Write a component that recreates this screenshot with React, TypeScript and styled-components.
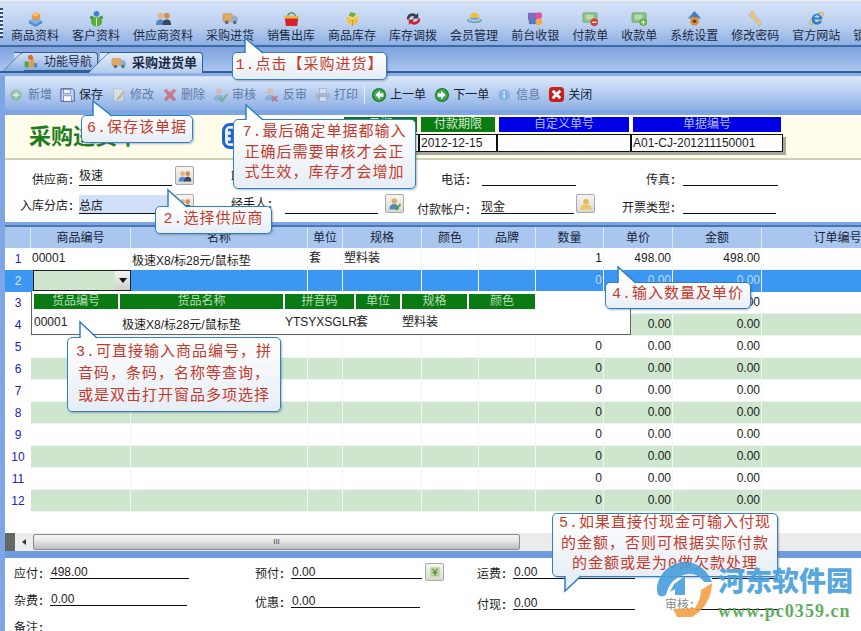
import React from "react";
import styled, { createGlobalStyle } from "styled-components";

const Global = createGlobalStyle`
  html, body { margin: 0; padding: 0; background: #7aa3e2; }
  * { box-sizing: border-box; }
`;

const FONT = `"Liberation Sans", "Noto Sans CJK SC", sans-serif`;

const Page = styled.div`
  position: relative; width: 861px; height: 631px; overflow: hidden;
  background: #7fa6e4; font: 12px/16px ${FONT}; color: #1c1c1c;
`;
const TopEdge = styled.div`height: 3px; background: linear-gradient(#f2f4f8, #c4d3ea);`;
const NavBar = styled.nav`
  position: relative; height: 44px; display: flex; gap: 13px; padding: 7px 0 0 11px; overflow: hidden;
  background: linear-gradient(#d3e2f8 0%, #bcd0f0 50%, #8eb0e3 100%);
  border-bottom: 2px solid #3d6ba6;
  &::before {
    content: ""; position: absolute; left: 0; top: 5px; width: 3px; height: 30px;
    background: repeating-linear-gradient(#2c4f7c 0 2px, #e6eef9 2px 4px);
  }
`;
const NavItem = styled.div`
  flex: none; display: flex; flex-direction: column; align-items: center; white-space: nowrap;
  color: #1b2a44; line-height: 16px; gap: 1px;
`;
const TabStrip = styled.div`
  height: 26px; display: flex; align-items: flex-end; padding-left: 14px; gap: 2px;
  background: linear-gradient(#7ea2de, #aac5ef);
  border-bottom: 2px solid #2f5f96;
`;
const Tab = styled.div<{ $active?: boolean }>`
  position: relative; height: ${p => (p.$active ? 21 : 19)}px; width: ${p => (p.$active ? 103 : 84)}px;
  display: flex; align-items: center; gap: ${p => (p.$active ? 5 : 6)}px; padding-left: ${p => (p.$active ? 11 : 9)}px;
  margin-bottom: ${p => (p.$active ? -2 : 0)}px; font-weight: ${p => (p.$active ? 700 : 400)};
  font-size: ${p => (p.$active ? 13 : 12)}px;
  background: ${p => (p.$active ? "linear-gradient(#e2ecfb, #b4cbef)" : "linear-gradient(#cfdff6, #8fb0e4)")};
  border: 1px solid #2f5f96; border-left: 0; border-bottom: ${p => (p.$active ? 0 : 1)}px solid #2f5f96;
  border-radius: 0 4px 0 0; color: #1b2a44; z-index: ${p => (p.$active ? 2 : 1)};
  & > * { position: relative; z-index: 1; }
  &::before {
    content: ""; position: absolute; z-index: 0; left: -2px; top: -1px; bottom: ${p => (p.$active ? 0 : -1)}px; width: 20px;
    background: inherit; border-left: 1px solid #2f5f96; border-top: 1px solid #2f5f96;
    transform: skewX(-45deg); border-radius: 3px 0 0 0;
  }
`;
const SpacerLight = styled.div`height: 3px; background: #8bafe4;`;
const Body = styled.div`padding-left: 5px;`;
const ActionBar = styled.div`
  height: 34px; display: flex; align-items: center; gap: 8px; padding: 2px 0 0 4px;
  background: linear-gradient(#dbe8fb, #8eb0e5); border-top: 1px solid #cfdcf1;
`;
const Action = styled.div<{ $off?: boolean }>`
  display: flex; align-items: center; gap: 3px; white-space: nowrap;
  color: ${p => (p.$off ? "#5d7aa6" : "#15233a")};
  & > svg { opacity: ${p => (p.$off ? 0.5 : 1)}; }
`;
const Divider = styled.div`width: 1px; height: 18px; background: #6f8fbd; border-right: 1px solid #e6eef9; margin: 0 -2px;`;
const Gap = styled.div<{ $h: number; $c?: string }>`height: ${p => p.$h}px; background: ${p => p.$c || "#7fa6e4"};`;
const TitleBand = styled.div`
  height: 45px; display: flex; background: #fffdea; border-bottom: 2px solid #cfcfb4; padding-top: 2px; position: relative;
`;
const Title = styled.div`
  width: 217px; padding: 3px 0 0 24px; font-size: 22px; line-height: 28px; font-weight: 700; color: #1f7d1f; white-space: nowrap;
  font-family: "Noto Sans CJK SC", sans-serif;
`;
const Stamp = styled.svg`flex: none; margin: 6px 90px 0 0;`;
const Meta = styled.div`
  display: grid; grid-template-columns: 77px 78px 134px 152px; grid-template-rows: 15px 18px; row-gap: 2px;
`;
const MetaHead = styled.div<{ $blue?: boolean }>`
  margin: 0 2px; text-align: center; line-height: 15px;
  background: ${p => (p.$blue ? "#0000e6" : "#0a7a12")};
  color: ${p => (p.$blue ? "#aebcff" : "#d4ecd4")};
`;
const MetaValue = styled.div`
  background: #fff; border: 1px solid #111; padding-left: 1px; line-height: 16px; box-shadow: 3px 3px 0 #a8a8a0; white-space: nowrap; overflow: hidden;
`;
const Form = styled.div`
  height: 62px; background: #fff; padding-top: 7px; display: grid; row-gap: 8px;
  grid-template-columns: 68px 130px 69px 133px 65px 130px 75px 1fr; grid-auto-rows: 20px;
`;
const Label = styled.div<{ $dy?: number }>`
  text-align: right; line-height: 20px; white-space: nowrap; padding-top: ${p => Math.max(p.$dy || 0, 0)}px;
  margin-top: ${p => Math.min(p.$dy || 0, 0)}px;
  &::after { content: ":"; font-weight: 700; margin-left: 1px; }
`;
const InputCell = styled.div<{ $pad: number; $gap?: number }>`
  display: flex; align-items: flex-start; gap: ${p => p.$gap ?? 3}px; padding-left: ${p => p.$pad}px;
`;
const Line = styled.div<{ $w: number; $fill?: boolean; $dy?: number }>`
  width: ${p => p.$w}px; height: 19px; border-bottom: 1px solid #111; line-height: 15px; white-space: nowrap;
  padding-top: ${p => p.$dy || 0}px;
  background: ${p => (p.$fill ? "#cfe0f8" : "transparent")};
`;
const PickButton = styled.div`
  width: 19px; height: 19px; flex: none; display: flex; align-items: center; justify-content: center;
  border: 1px solid #a9a9a9; border-radius: 2px; background: linear-gradient(#f6f6f2, #d9d9d2); margin-top: -1px;
`;
const SumPick = styled(PickButton)`margin: 0 0 -2px 0; height: 18px;`;
const GridBox = styled.div`position: relative; background: #fff; border-top: 2px solid #4c78b0;`;
const COLS = "26px 100px 177px 35px 79px 57px 57px 68px 69px 89px 152px";
const HeadRow = styled.div`display: grid; grid-template-columns: ${COLS}; height: 21px; background: #a9c7ee;`;
const HeadCell = styled.div`
  border-right: 1px solid #dfe9f7; text-align: center; line-height: 22px; color: #16233a; white-space: nowrap; overflow: hidden;
`;
const DataRow = styled.div<{ $kind: "white" | "green" | "sel" }>`
  display: grid; grid-template-columns: ${COLS}; height: 22px;
  background: ${p => (p.$kind === "green" ? "#cde6cd" : p.$kind === "sel" ? "#3c97f2" : "#fff")};
  border-bottom: 1px solid ${p => (p.$kind === "sel" ? "#3c97f2" : "#f1f5f1")};
  color: ${p => (p.$kind === "sel" ? "#bcdcf5" : "#1c1c1c")};
`;
const RowNum = styled.div<{ $sel?: boolean }>`
  text-align: center; line-height: 22px; font-size: 12px; color: ${p => (p.$sel ? "#d8e8ff" : "#2323b8")};
  background: ${p => (p.$sel ? "#3c97f2" : "#fff")};
`;
const Cell = styled.div<{ $right?: boolean; $low?: boolean }>`
  border-right: 1px solid #f3f7f3; line-height: 21px; white-space: nowrap; overflow: hidden;
  padding: ${p => (p.$low ? 3 : 0)}px ${p => (p.$right ? 1 : 0)}px 0 ${p => (p.$right ? 0 : 1)}px;
  text-align: ${p => (p.$right ? "right" : "left")};
`;
const ComboCell = styled.div`
  border: 1px solid #222; height: 21px; margin: 0 0 0 2px; background: #cde6cd; display: flex; justify-content: flex-end;
`;
const ComboArrow = styled.div`
  width: 15px; background: linear-gradient(#f4f4f4, #cfcfcf); display: flex; align-items: center; justify-content: center;
  &::after { content: ""; border: 4px solid transparent; border-top: 5px solid #111; border-bottom: 0; }
`;
const Dropdown = styled.div`
  position: absolute; left: 26px; top: 64px; width: 600px; height: 44px; background: #fff;
  border: 1px solid #666; border-top: 0; padding: 3px 2px 0; z-index: 3;
`;
const DropHead = styled.div`
  display: grid; grid-template-columns: 86px 165px 71px 46px 67px 68px; height: 15px;
`;
const DropHeadCell = styled.div`
  margin-right: 2px; background: #0a7a12; color: #b9dcb9; text-align: center; line-height: 15px;
`;
const DropRow = styled.div`
  display: grid; grid-template-columns: 86px 165px 71px 46px 67px 68px; height: 26px; padding-top: 5px; line-height: 16px; white-space: nowrap;
`;
const DropName = styled.span`padding: 3px 0 0 2px;`;
const Blank = styled.div`height: 21px; background: #fff;`;
const Scrollbar = styled.div`display: flex; height: 18px; background: #ececec;`;
const ScrollCorner = styled.div`width: 10px; background: #666;`;
const ScrollArrow = styled.div`
  width: 18px; display: flex; align-items: center; justify-content: center;
  &::after { content: ""; border: 3px solid transparent; border-right: 4px solid #333; border-left: 0; }
`;
const ScrollThumb = styled.div`
  width: 487px; margin: 1px 0; border: 1px solid #8b8b8b; border-radius: 2px; text-align: center; font-size: 8px; line-height: 13px; color: #444;
  background: linear-gradient(#f5f5f5, #e8e8e8 40%, #bdbdbd);
`;
const Summary = styled.div`
  height: 73px; background: #fff; padding-top: 6px; display: grid; position: relative;
  grid-template-columns: 241px 222px 188px 1fr; grid-template-rows: 15px 15px 15px; row-gap: 12px;
`;
const SumField = styled.div<{ $drop?: number; $faded?: boolean; $pad?: number; $gap?: number }>`
  display: flex; align-items: flex-end; gap: ${p => p.$gap ?? 7}px; padding-left: ${p => p.$pad ?? 9}px; margin-top: ${p => p.$drop || 0}px;
  height: 15px; color: ${p => (p.$faded ? "#8a8a8a" : "#1c1c1c")};
`;
const SumLabel = styled.span<{ $after?: number }>`
  flex: none; line-height: 15px; margin-bottom: -3px; margin-right: ${p => p.$after || 0}px;
  &::after { content: ":"; font-weight: 700; margin-left: 1px; }
`;
const SumLine = styled.div<{ $w: number }>`
  width: ${p => p.$w}px; height: 15px; border-bottom: 1px solid #111; line-height: 13px; padding: 2px 0 0 1px; flex: none;
`;
const Bubble = styled.div<{ $x: number; $y: number; $w: number; $h: number; $lh?: number }>`
  position: absolute; z-index: 10; left: ${p => p.$x}px; top: ${p => p.$y}px; width: ${p => p.$w}px; height: ${p => p.$h}px;
  border: 1.5px solid #2f80c6; border-radius: 5px; background: linear-gradient(#ffffff, #e6edf5);
  box-shadow: 1px 1px 2px rgba(60, 80, 110, .4); display: flex; align-items: center; justify-content: center;
  text-align: center; white-space: nowrap; color: #c63a2b; letter-spacing: 1px;
  font: 15px/${p => p.$lh || 20.5}px "Liberation Mono", "Noto Sans CJK SC", monospace;
`;
const Tail = styled.svg<{ $l: number; $t: number }>`
  position: absolute; left: ${p => p.$l}px; top: ${p => p.$t}px; overflow: visible;
`;
const Watermark = styled.div`
  position: absolute; z-index: 12; left: 657px; top: 562px; width: 204px; height: 60px; display: flex; gap: 3px; pointer-events: none;
`;
const MarkText = styled.div`
  display: flex; flex-direction: column; font-family: "Liberation Serif", "Noto Sans CJK SC", serif; font-weight: 700; white-space: nowrap;
`;
const MarkCn = styled.div`font: 900 27px/32px "Noto Sans CJK SC", sans-serif; color: #4aa0dc; opacity: .92; margin-top: 2px; width: 135px;`;
const MarkEn = styled.div`font-size: 18px; line-height: 18px; color: #5fae5f; margin-top: 6px; letter-spacing: 1.050px;`;

type IconName = "box" | "user" | "people" | "truck" | "basket" | "stock" | "swap" | "vip" | "pos" | "billOut" | "billIn" | "gear" | "key" | "ie" | "lock"
  | "plus" | "save" | "edit" | "del" | "check" | "uncheck" | "print" | "prev" | "next" | "info" | "close" | "nav" | "yellowUser" | "greenUser" | "money";

const Icon: React.FC<{ n: IconName; s?: number }> = ({ n, s = 18 }) => {
  const shapes: Record<IconName, React.ReactNode> = {
    box: <><path d="M2 11l7-3 7 3-7 4z" fill="#7cb2e6" /><path d="M2 11v3l7 4v-3zM16 11v3l-7 4v-3z" fill="#4f8fd0" /><path d="M5 5l4-3 5 2v5l-5 2-4-2z" fill="#e89a45" /><path d="M5 5l4 2 5-3-5-2z" fill="#f6c27c" /></>,
    user: <><circle cx="9" cy="4" r="3" fill="#3d7fc9" /><ellipse cx="9" cy="12.5" rx="6" ry="5" fill="#5fae3c" /><circle cx="4" cy="8" r="2" fill="#4a9a3c" /><circle cx="14" cy="8" r="2" fill="#4a9a3c" /><path d="M9 8v9" stroke="#d6ecc4" /></>,
    people: <><circle cx="6" cy="6" r="3" fill="#e3b27a" /><circle cx="12.5" cy="6" r="3" fill="#c98f55" /><path d="M1 16c0-5 2-6 5-6s4 2 4 6z" fill="#4f86c4" /><path d="M8 16c0-5 2-6 4.500-6s4.500 1 4.500 6z" fill="#39485e" /></>,
    truck: <><rect x="1" y="4" width="10" height="8" rx="1" fill="#e5a85e" stroke="#b98543" strokeWidth=".5" /><path d="M11 6h4l2 3v3h-6z" fill="#8db0d6" /><circle cx="5" cy="13" r="2" fill="#5a6e88" /><circle cx="13.500" cy="13" r="2" fill="#5a6e88" /></>,
    basket: <><path d="M5 7a4 4 0 018 0" fill="none" stroke="#3d8f4a" strokeWidth="1.500" /><rect x="1" y="6" width="16" height="3" rx="1" fill="#e9b93c" /><path d="M2 9h14l-1 8H3z" fill="#d8222a" /></>,
    stock: <><path d="M3 7l7-4 5 3v7l-6 4-6-4z" fill="#ecc14e" /><path d="M3 7l6 3 6-4-5-3z" fill="#f5db82" /><path d="M7 2l6 2-3 4-5-2z" fill="#67ae4d" /><path d="M9 10v7" stroke="#c49a2c" /></>,
    swap: <><path d="M2 10a6 6 0 0110-5l2-2v6H8l2-2a4 4 0 00-6 3z" fill="#333c48" /><path d="M16 9a6 6 0 01-10 5l-2 2V10h6l-2 2a4 4 0 006-3z" fill="#d0242c" /></>,
    vip: <><ellipse cx="9" cy="7" rx="5" ry="4" fill="#f0c23c" /><ellipse cx="9" cy="11" rx="8" ry="3" fill="#6ea8dc" /><path d="M3 10c3 1.500 9 1.500 12 0" stroke="#f6e29a" fill="none" /></>,
    pos: <><rect x="1" y="3" width="10" height="8" rx="1" fill="#7d6cc4" /><rect x="2" y="10" width="10" height="5" fill="#4f7ac0" /><circle cx="12.500" cy="6" r="3.500" fill="#e44fa4" /><circle cx="12.500" cy="12.500" r="3.500" fill="#f2a93b" /></>,
    billOut: <><rect x="1" y="3" width="15" height="10" rx="1" fill="#8cc084" stroke="#6b9c68" strokeWidth=".7" /><rect x="4" y="5" width="8" height="5" fill="#b7dcb0" /><circle cx="13" cy="13" r="4" fill="#d93a34" /><path d="M10.500 13h5" stroke="#fff" strokeWidth="1.400" /></>,
    billIn: <><rect x="1" y="3" width="15" height="10" rx="1" fill="#8cc084" stroke="#6b9c68" strokeWidth=".7" /><rect x="4" y="5" width="8" height="5" fill="#b7dcb0" /><circle cx="13" cy="13" r="4" fill="#5cae38" /><path d="M10.500 13h5M13 10.500v5" stroke="#fff" strokeWidth="1.200" /></>,
    gear: <><path d="M9 1l7 8H2z" fill="#4b7eb8" /><rect x="5" y="8" width="8" height="3" fill="#a9c1dc" /><circle cx="9" cy="12" r="4.500" fill="#dd8a2e" /><circle cx="9" cy="12" r="1.800" fill="#5c3c18" /></>,
    key: <><path d="M4 1l3 1 1 3 7 9-2 3-7-9-3-1-1-3 2 1 1-1z" fill="#e9c67a" stroke="#c6a050" strokeWidth=".5" /></>,
    ie: <><ellipse cx="9" cy="9" rx="9" ry="3.500" transform="rotate(-40 9 9)" fill="none" stroke="#d7b23c" strokeWidth="1.200" /><path d="M4 10a5.500 5.500 0 0111 -1v1H7a2.800 2.800 0 005.200 1.500h2.600A5.500 5.500 0 014 10zm3-2h5a2.500 2.500 0 00-5 0z" fill="#2a80d6" /></>,
    lock: <><rect x="4" y="8" width="10" height="8" fill="#e0b040" /><path d="M6 8V5a3 3 0 016 0v3" fill="none" stroke="#777" strokeWidth="1.500" /></>,
    plus: <><circle cx="8" cy="9" r="6.500" fill="#6fbc4f" /><path d="M4.500 9h7M8 5.500v7" stroke="#fff" strokeWidth="2" /></>,
    save: <><path d="M1 2h13l2 2v12H1z" fill="#c3d3f0" stroke="#3d4f92" /><rect x="4" y="2.500" width="8" height="5" fill="#eef2fb" stroke="#3d4f92" strokeWidth=".6" /><rect x="4" y="10" width="9" height="6" fill="#fff" stroke="#3d4f92" strokeWidth=".6" /></>,
    edit: <><path d="M3 2h8l3 3v11H3z" fill="#f3f1dc" stroke="#9aa39a" strokeWidth=".7" /><path d="M7 12l7-8 2 2-7 8-3 1z" fill="#d3a84e" /></>,
    del: <><path d="M2 4l3-2 4 4 4-4 3 2-4 5 4 5-3 2-4-4-4 4-3-2 4-5z" fill="#d7312e" /></>,
    check: <><circle cx="7" cy="5" r="3.500" fill="#e3b27a" /><path d="M1 15c0-5 3-6 6-6s5 2 5 6z" fill="#6c9ad2" /><path d="M7 12l3 4 6-8" fill="none" stroke="#46a534" strokeWidth="2.400" /></>,
    uncheck: <><circle cx="7" cy="5" r="3.500" fill="#e3b27a" /><path d="M1 15c0-5 3-6 6-6s5 2 5 6z" fill="#6c9ad2" /><path d="M9 10l6 6M15 10l-6 6" stroke="#cc2f3a" strokeWidth="2.200" /></>,
    print: <><rect x="5" y="1.500" width="8" height="6" fill="#eee" stroke="#777" strokeWidth=".7" /><rect x="1" y="7" width="16" height="6" rx="1" fill="#9aa5b3" /><rect x="5" y="11" width="8" height="5.500" fill="#f6f6f6" stroke="#777" strokeWidth=".7" /></>,
    prev: <><circle cx="9" cy="9" r="8" fill="#1f7d32" /><circle cx="9" cy="9" r="6.500" fill="#3fa64a" /><path d="M10 4l-5 5 5 5v-3h4V7h-4z" fill="#fff" /></>,
    next: <><circle cx="9" cy="9" r="8" fill="#1f7d32" /><circle cx="9" cy="9" r="6.500" fill="#3fa64a" /><path d="M8 4l5 5-5 5v-3H4V7h4z" fill="#fff" /></>,
    info: <><circle cx="8" cy="9" r="6.500" fill="#5a9fe2" /><rect x="7" y="8" width="2" height="5" fill="#fff" /><circle cx="8" cy="6" r="1.200" fill="#fff" /></>,
    close: <><rect x="1" y="1" width="16" height="16" rx="4" fill="#c8201f" /><path d="M5 5l8 8M13 5l-8 8" stroke="#fff" strokeWidth="3" /></>,
    nav: <><rect x="2" y="9" width="5" height="7" fill="#5ba53d" /><rect x="8" y="5" width="5" height="11" fill="#e5a03a" /><circle cx="9" cy="4" r="3" fill="#d86a3a" /><rect x="13" y="11" width="4" height="5" fill="#4f86c4" /></>,
    yellowUser: <><circle cx="9" cy="6" r="3.500" fill="#e8b84c" /><path d="M2 16c0-5 3-6 7-6s7 1 7 6z" fill="#eec664" /></>,
    greenUser: <><circle cx="8" cy="5" r="3.500" fill="#e3a86a" /><path d="M2 16c0-6 3-7 6-7s6 2 6 7z" fill="#4f86c4" /><path d="M8 12l3 4 5-7" stroke="#46a534" strokeWidth="2" fill="none" /></>,
    money: <><rect x="3" y="3" width="12" height="12" fill="#b8d39a" /><path d="M6 5l3 4 3-4M9 9v5M6 10h6" stroke="#3c7a2c" fill="none" strokeWidth="1.200" /></>,
  };
  return <svg width={s} height={s} viewBox="0 0 18 18">{shapes[n]}</svg>;
};

const navItems: [string, IconName][] = [
  ["商品资料", "box"], ["客户资料", "user"], ["供应商资料", "people"], ["采购进货", "truck"], ["销售出库", "basket"],
  ["商品库存", "stock"], ["库存调拨", "swap"], ["会员管理", "vip"], ["前台收银", "pos"], ["付款单", "billOut"],
  ["收款单", "billIn"], ["系统设置", "gear"], ["修改密码", "key"], ["官方网站", "ie"], ["锁定系统", "lock"],
];
const actions: [string, IconName, boolean][] = [
  ["新增", "plus", true], ["保存", "save", false], ["修改", "edit", true], ["删除", "del", true],
  ["审核", "check", true], ["反审", "uncheck", true], ["打印", "print", true],
];
const heads = ["", "商品编号", "名称", "单位", "规格", "颜色", "品牌", "数量", "单价", "金额", "订单编号"];

const Callout: React.FC<{
  x: number; y: number; w: number; h: number; lh?: number; tailX: number; tw: number; th: number; down?: boolean; children: React.ReactNode;
}> = ({ x, y, w, h, lh, tailX, tw, th, down, children }) => (
  <Bubble $x={x} $y={y} $w={w} $h={h} $lh={lh}>
    <Tail $l={tailX} $t={down ? h - 3 : -th - 1} width={tw} height={th + 2}>
      {down ? (
        <>
          <polygon points={`0,0 0,${th + 1} ${tw},0`} fill="#e8eef5" />
          <polyline points={`0,1 0,${th + 1} ${tw},1`} fill="none" stroke="#2f80c6" strokeWidth="1.500" />
        </>
      ) : (
        <>
          <polygon points={`0,${th + 2} 0,0 ${tw},${th + 2}`} fill="#fff" />
          <polyline points={`0,${th + 1} 0,0 ${tw},${th + 1}`} fill="none" stroke="#2f80c6" strokeWidth="1.500" />
        </>
      )}
    </Tail>
    <div>{children}</div>
  </Bubble>
);

const rows = Array.from({ length: 12 }, (_, i) => i + 1);

export default function App() {
  return (
    <Page>
      <Global />
      <TopEdge />
      <NavBar>
        {navItems.map(([t, n]) => (
          <NavItem key={t}><Icon n={n} s={17} />{t}</NavItem>
        ))}
      </NavBar>
      <TabStrip>
        <Tab><Icon n="nav" s={15} /><span>功能导航</span></Tab>
        <Tab $active><Icon n="truck" s={16} /><span>采购进货单</span></Tab>
      </TabStrip>
      <SpacerLight />
      <Body>
        <ActionBar>
          {actions.map(([t, n, off]) => (
            <Action key={t} $off={off}><Icon n={n} s={16} />{t}</Action>
          ))}
          <Divider />
          <Action><Icon n="prev" s={16} />上一单</Action>
          <Action><Icon n="next" s={16} />下一单</Action>
          <Action $off><Icon n="info" s={16} />信息</Action>
          <Action><Icon n="close" s={17} />关闭</Action>
        </ActionBar>
        <Gap $h={5} />
        <TitleBand>
          <Title>采购进货单</Title>
          <Stamp width="30" height="26" viewBox="0 0 30 26">
            <rect x="0" y="0" width="30" height="26" rx="8" fill="#1d62d6" />
            <rect x="3" y="3" width="24" height="20" rx="5" fill="#eaf1fc" />
            <path d="M6 7h8M10 7v12M6 13h8M6 19h8" stroke="#1d62d6" strokeWidth="2.500" fill="none" />
          </Stamp>
          <Meta>
            <MetaHead>日期</MetaHead>
            <MetaHead>付款期限</MetaHead>
            <MetaHead $blue>自定义单号</MetaHead>
            <MetaHead $blue>单据编号</MetaHead>
            <MetaValue>2012-11-15</MetaValue>
            <MetaValue>2012-12-15</MetaValue>
            <MetaValue />
            <MetaValue>A01-CJ-201211150001</MetaValue>
          </Meta>
        </TitleBand>
        <Form>
          <Label $dy={3}>供应商</Label>
          <InputCell $pad={6}><Line $w={93} $dy={2}>极速</Line><PickButton><Icon n="people" s={14} /></PickButton></InputCell>
          <Label>联系人</Label>
          <InputCell $pad={13}><Line $w={93} /></InputCell>
          <Label $dy={3}>电话</Label>
          <InputCell $pad={12}><Line $w={94} /></InputCell>
          <Label $dy={3}>传真</Label>
          <InputCell $pad={8}><Line $w={95} /></InputCell>
          <Label $dy={1}>入库分店</Label>
          <InputCell $pad={6}><Line $w={93} $fill $dy={4}>总店</Line><PickButton><Icon n="people" s={14} /></PickButton></InputCell>
          <Label $dy={-1}>经手人</Label>
          <InputCell $pad={13} $gap={7}><Line $w={93} /><PickButton><Icon n="greenUser" s={14} /></PickButton></InputCell>
          <Label $dy={5}>付款帐户</Label>
          <InputCell $pad={11} $gap={2}><Line $w={93} $dy={5}>现金</Line><PickButton><Icon n="yellowUser" s={14} /></PickButton></InputCell>
          <Label $dy={3}>开票类型</Label>
          <InputCell $pad={8}><Line $w={93} /></InputCell>
        </Form>
        <Gap $h={3} />
        <GridBox>
          <HeadRow>{heads.map((h, i) => <HeadCell key={i}>{h}</HeadCell>)}</HeadRow>
          {rows.map(r => {
            const kind = r === 2 ? "sel" : r > 2 && r % 2 === 0 ? "green" : "white";
            return (
              <DataRow key={r} $kind={kind}>
                <RowNum $sel={r === 2}>{r}</RowNum>
                {r === 1 ? <Cell>00001</Cell> : r === 2 ? <ComboCell><ComboArrow /></ComboCell> : <Cell />}
                <Cell $low>{r === 1 ? "极速X8/标28元/鼠标垫" : ""}</Cell>
                <Cell>{r === 1 ? "套" : ""}</Cell>
                <Cell>{r === 1 ? "塑料装" : ""}</Cell>
                <Cell />
                <Cell />
                <Cell $right>{r === 1 ? "1" : "0"}</Cell>
                <Cell $right>{r === 1 ? "498.00" : "0.00"}</Cell>
                <Cell $right>{r === 1 ? "498.00" : "0.00"}</Cell>
                <Cell />
              </DataRow>
            );
          })}
          <Dropdown>
            <DropHead>
              {["货品编号", "货品名称", "拼音码", "单位", "规格", "颜色"].map(t => <DropHeadCell key={t}>{t}</DropHeadCell>)}
            </DropHead>
            <DropRow>
              <span>00001</span><DropName>极速X8/标28元/鼠标垫</DropName><span>YTSYXSGLR</span><span>套</span><span>塑料装</span><span />
            </DropRow>
          </Dropdown>
          <Blank />
          <Scrollbar>
            <ScrollCorner />
            <ScrollArrow />
            <ScrollThumb>III</ScrollThumb>
          </Scrollbar>
        </GridBox>
        <Gap $h={7} $c="#6f9ce0" />
        <Summary>
          <SumField><SumLabel>应付</SumLabel><SumLine $w={139}>498.00</SumLine></SumField>
          <SumField $gap={3}><SumLabel $after={4}>预付</SumLabel><SumLine $w={131}>0.00</SumLine><SumPick><Icon n="money" s={14} /></SumPick></SumField>
          <SumField><SumLabel>运费</SumLabel><SumLine $w={122}>0.00</SumLine></SumField>
          <SumField $pad={56}><SumLine $w={66} /></SumField>
          <SumField><SumLabel>杂费</SumLabel><SumLine $w={137}>0.00</SumLine></SumField>
          <SumField $drop={2}><SumLabel>优惠</SumLabel><SumLine $w={129}>0.00</SumLine></SumField>
          <SumField $drop={4}><SumLabel>付现</SumLabel><SumLine $w={122}>0.00</SumLine></SumField>
          <SumField $drop={4} $faded $gap={2}><SumLabel>审核</SumLabel><SumLine $w={83} /></SumField>
          <SumField><SumLabel>备注</SumLabel></SumField>
        </Summary>
      </Body>

      <Callout x={232} y={52} w={155} h={28} tailX={12} tw={18} th={14}>1.点击【采购进货】</Callout>
      <Callout x={81} y={115} w={112} h={28} tailX={11} tw={19} th={14}>6.保存该单据</Callout>
      <Callout x={233} y={119} w={183} h={70} tailX={12} tw={17} th={14}>7.最后确定单据都输入<br />正确后需要审核才会正<br />式生效，库存才会增加</Callout>
      <Callout x={155} y={206} w={117} h={28} tailX={12} tw={19} th={16}>2.选择供应商</Callout>
      <Callout x={67} y={337} w={214} h={75} lh={22} tailX={12} tw={17} th={15}>3.可直接输入商品编号，拼<br />音码，条码，名称等查询，<br />或是双击打开窗品多项选择</Callout>
      <Callout x={605} y={282} w={146} h={27} tailX={12} tw={18} th={15}>4.输入数量及单价</Callout>
      <Callout x={552} y={513} w={226} h={64} tailX={12} tw={16} th={15} down>5.如果直接付现金可输入付现<br />的金额，否则可根据实际付款<br />的金额或是为0做欠款处理</Callout>

      <Watermark>
        <svg width="58" height="60" viewBox="0 0 58 60">
          <path d="M0 28C0 12 14 0 28 0c13 0 23 9 27 20h-8C43 14 37 11 30 12 20 14 12 20 9 33 4 36 0 34 0 28z" fill="#4aa0dc" opacity=".92" />
          <path d="M17 22l11-8v19H18v-6l-5 3z" fill="#4aa0dc" opacity=".92" />
          <path d="M55 21c0 13-7 27-20 34H20l-4-8 22-1c4-6 6-12 6-18z" fill="#f29a3c" opacity=".85" />
        </svg>
        <MarkText>
          <MarkCn>河东软件园</MarkCn>
          <MarkEn>www.pc0359.cn</MarkEn>
        </MarkText>
      </Watermark>
    </Page>
  );
}
